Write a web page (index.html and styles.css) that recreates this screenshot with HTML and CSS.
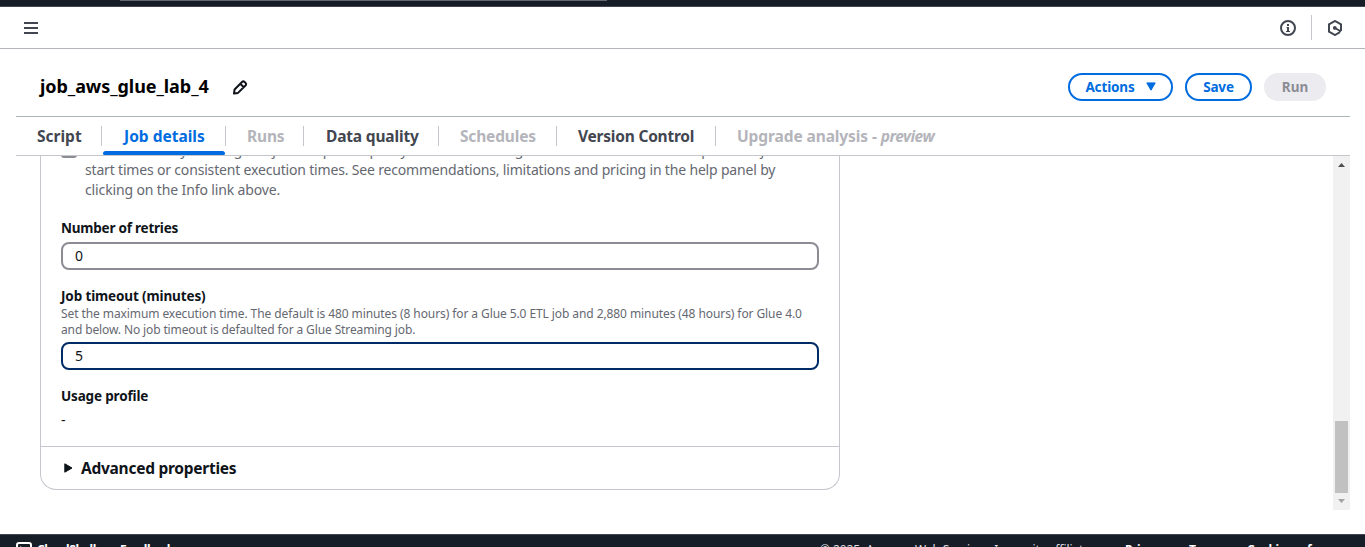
FILE: index.html
```html
<!DOCTYPE html>
<html lang="en">
<head>
<meta charset="utf-8">
<title>job_aws_glue_lab_4</title>
<link rel="stylesheet" href="styles.css">
</head>
<body>
<div class="topnav"><div class="search"></div></div>
<div class="toolbar">
  <svg class="menu" width="14" height="12" viewBox="0 0 14 12"><path d="M0 1h14M0 6h14M0 11h14" stroke="#424650" stroke-width="2"/></svg>
  <div class="tools">
    <svg width="16" height="16" viewBox="0 0 16 16" fill="none" stroke="#424650"><circle cx="8" cy="8" r="7" stroke-width="2"/><path d="M8 4v2" stroke-width="2"/><path d="M6.500 7.500H8V11M6 11.500h4" stroke-width="1.200"/><path d="M8 7v4" stroke-width="1.800"/></svg>
    <span class="rule"></span>
    <svg width="16" height="16" viewBox="0 0 16 16" fill="none" stroke="#424650" stroke-width="2"><path d="M13 12.200 8 15 2 11.600V4.400L8 1l6 3.400V11M8 8l6 3.500"/><circle cx="7.800" cy="7.900" r="1.200" fill="#424650" stroke-width="1.400"/></svg>
  </div>
</div>
<header class="jobhead">
  <h1><span class="t-title">job_aws_glue_lab_4</span></h1>
  <svg class="pencil" width="16" height="16" viewBox="0 0 16 16" fill="none" stroke="#0f141a" stroke-width="2" stroke-linejoin="round"><path d="M2 14.500l.6-4L10 3Q11.300 1.800 12.600 3l.9.900Q14.700 5.200 13.500 6.500L6 13.900zM8.500 5l3 3"/></svg>
  <div class="buttons">
    <button class="btn actions"><span class="t-actions">Actions</span><svg width="10" height="9" viewBox="0 0 10 9"><path d="M.8.900h8.400L5 8.200z" fill="#006ce0" stroke="#006ce0" stroke-linejoin="round"/></svg></button>
    <button class="btn save"><span class="t-save">Save</span></button>
    <button class="btn run" disabled><span class="t-run">Run</span></button>
  </div>
</header>
<nav class="tabs">
  <div class="tab w1"><span class="t-script">Script</span></div>
  <div class="tab w2 active"><span class="t-details">Job details</span></div>
  <div class="tab w3 off"><span class="t-runs">Runs</span></div>
  <div class="tab w4"><span class="t-quality">Data quality</span></div>
  <div class="tab w5 off"><span class="t-sched">Schedules</span></div>
  <div class="tab w6"><span class="t-version">Version Control</span></div>
  <div class="tab w7 off"><span class="t-upgrade">Upgrade analysis - <i>preview</i></span></div>
</nav>
<main class="scroller">
  <section class="card">
    <div class="form">
      <div class="flex-option">
        <span class="checkbox"></span>
        <div class="desc"><span class="t-d1">Reduce costs by running this job on spare capacity. Ideal for non-urgent workloads that don't require fast job</span><br><span class="t-d2">start times or consistent execution times. See recommendations, limitations and pricing in the help panel by</span><br><span class="t-d3">clicking on the Info link above.</span></div>
      </div>
      <div class="field retries">
        <label><span class="t-retries">Number of retries</span></label>
        <div class="input">0</div>
      </div>
      <div class="field timeout">
        <label><span class="t-timeout">Job timeout (minutes)</span></label>
        <p class="hint"><span class="t-h1">Set the maximum execution time. The default is 480 minutes (8 hours) for a Glue 5.0 ETL job and 2,880 minutes (48 hours) for Glue 4.0</span><br><span class="t-h2">and below. No job timeout is defaulted for a Glue Streaming job.</span></p>
        <div class="input focused">5</div>
      </div>
      <div class="field usage">
        <label><span class="t-usage">Usage profile</span></label>
        <div class="value">-</div>
      </div>
    </div>
    <div class="advanced">
      <svg width="9" height="10" viewBox="0 0 9 10"><path d="M.8.800v8.400L8 5z" fill="#0f141a" stroke="#0f141a" stroke-linejoin="round"/></svg>
      <span class="t-adv">Advanced properties</span>
    </div>
  </section>
  <div class="scrollbar">
    <svg width="7" height="4" viewBox="0 0 7 4"><path d="M0 4 3.500 0 7 4z" fill="#505050"/></svg>
    <div class="thumb"></div>
    <svg width="7" height="4" viewBox="0 0 7 4"><path d="M0 0h7L3.500 4z" fill="#a3a3a3"/></svg>
  </div>
</main>
<footer class="footer">
  <svg width="16" height="16" viewBox="0 0 16 16" fill="none" stroke="#fff" stroke-width="2"><rect x="1" y="1" width="14" height="14" rx="2"/><path d="M4 5l3 3-3 3"/></svg>
  <b class="shell">CloudShell</b><b class="feedback">Feedback</b>
  <span class="copy">© 2025, Amazon Web Services, Inc. or its affiliates.</span>
  <b class="privacy">Privacy</b><b class="terms">Terms</b><b class="cookies">Cookie preferences</b>
</footer>
</body>
</html>
```
FILE: styles.css
```css
* { box-sizing: border-box; }
body { margin: 0; width: 1365px; height: 547px; overflow: hidden; background: #fff; color: #0f141a; font: 14px/20px "Noto Sans", "Open Sans", sans-serif; display: flex; flex-direction: column; }
svg { display: block; flex: none; }
span { white-space: nowrap; }
.topnav { height: 7px; background: #161d26; border-bottom: 1px solid #424650; flex: none; }
.search { width: 487px; height: 1px; margin-left: 120px; background: #656871; }
.toolbar { height: 42px; flex: none; border-bottom: 1px solid #b4b4bb; display: flex; justify-content: space-between; align-items: center; padding: 0 22px 0 24px; }
.tools { display: flex; align-items: center; gap: 15px; }
.rule { width: 1px; height: 25px; background: #c6c6cd; }
.jobhead { height: 67px; flex: none; display: flex; align-items: center; padding: 8px 39px 0 40px; }
h1 { margin: 0 0 2px; width: 192px; font-size: 18px; line-height: 22px; font-weight: 700; color: #000; }
.t-title { letter-spacing: -.06px; }
.buttons { margin-left: auto; display: flex; gap: 12px; }
.btn { height: 28px; margin: 0; padding: 0; border: 2px solid #006ce0; border-radius: 14px; background: #fff; color: #006ce0; font: 700 13.5px/20px "Noto Sans", sans-serif; display: flex; align-items: center; justify-content: center; }
.t-actions { letter-spacing: -.14px; }
.t-save { letter-spacing: -.15px; }
.actions { width: 105px; gap: 11px; }
.save { width: 67px; }
.run { width: 62px; background: #ebebf0; border-color: #ebebf0; color: #8c8c94; }
.tabs { height: 40px; flex: none; margin: 0 15px 0 16px; border-top: 1px solid #aab7b8; border-bottom: 1px solid #c6c6cd; display: flex; font-size: 15.5px; font-weight: 700; color: #424650; }
.tab { position: relative; height: 38px; line-height: 38px; padding-left: 21px; letter-spacing: -.17px; }
.tab::after { content: ""; position: absolute; right: 0; top: 9px; width: 1px; height: 20px; background: #c6c6cd; }
.w1 { width: 86px; letter-spacing: 0; }
.w2 { width: 124px; padding-left: 22px; letter-spacing: 0; }
.w3 { width: 78px; }
.w4 { width: 135px; padding-left: 22px; }
.w5 { width: 118px; }
.w6 { width: 159px; letter-spacing: -.22px; }
.w7 { width: 250px; letter-spacing: -.1px; }
.w7 i { letter-spacing: -.5px; }
.w7::after { display: none; }
.off { color: #b4b4bb; }
.active { color: #006ce0; }
.active::before { content: ""; position: absolute; left: 1px; right: 1px; bottom: 0; height: 4px; border-radius: 4px 4px 2px 2px; background: #006ce0; }
.scroller { height: 354px; flex: none; margin: 0 15px 0 16px; display: flex; justify-content: space-between; overflow: hidden; }
.card { margin-left: 24px; width: 800px; height: 334px; border: 1px solid #c6c6cd; border-top: 0; border-radius: 0 0 16px 16px; }
.form { display: flow-root; height: 291px; padding: 0 20px; border-bottom: 1px solid #c6c6cd; }
.flex-option { display: flex; margin-top: -16px; color: #656871; }
.desc { letter-spacing: -.177px; }
.t-d3 { letter-spacing: -.13px; }
.checkbox { width: 16px; height: 16px; margin: 2px 8px 0 0; border: 2px solid #8c8c94; border-radius: 3px; }
.retries { margin-top: 18px; }
.timeout { margin-top: 16px; }
.usage { margin-top: 16px; }
label { display: block; font-weight: 700; font-size: 13.5px; }
.t-retries { letter-spacing: -.22px; }
.t-timeout { letter-spacing: -.13px; }
.t-usage { letter-spacing: -.16px; }
.input { height: 28px; margin-top: 4px; padding: 0 12px; line-height: 24px; border: 2px solid #8c8c94; border-radius: 8px; }
.focused { border-color: #002b66; }
.hint { margin: 0; font-size: 12px; line-height: 16px; color: #656871; letter-spacing: -.087px; }
.t-h2 { letter-spacing: -.12px; }
.value { margin-top: 4px; }
.advanced { display: flex; align-items: center; gap: 8px; height: 42px; padding-left: 23px; font-size: 15.5px; font-weight: 700; }
.t-adv { letter-spacing: -.26px; }
.scrollbar { width: 17px; background: #f1f1f1; display: flex; flex-direction: column; align-items: center; padding: 7px 0; }
.thumb { width: 13px; height: 72px; margin: auto 0 6px; background: #c1c1c1; flex: none; }
.footer { height: 30px; flex: none; margin-top: 24px; background: #161d26; border-top: 1px solid #424650; color: #fff; font-size: 12px; line-height: 16px; display: flex; padding: 7px 0 0 16px; white-space: nowrap; }
.footer b { letter-spacing: -.4px; }
.shell { width: 83px; margin-left: 5px; }
.feedback { width: 700px; }
.copy { width: 305px; color: #dedee3; letter-spacing: -.07px; }
.privacy { width: 64px; }
.terms { width: 58px; }
```
